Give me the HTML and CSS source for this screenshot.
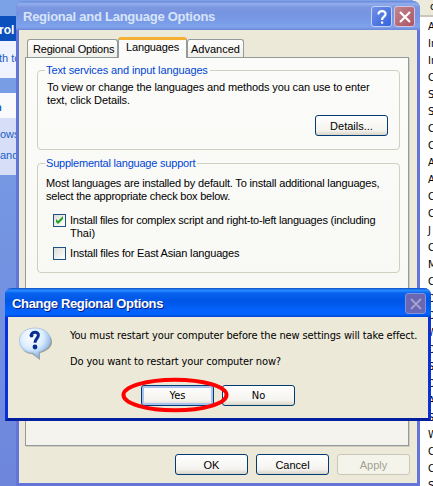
FILE: index.html
```html
<!DOCTYPE html>
<html lang="en">
<head>
<meta charset="utf-8">
<title>Regional and Language Options</title>
<link rel="stylesheet" href="styles.css">
</head>
<body>
<div class="desktop">
  <aside class="side">
    <div class="side-head">rol</div>
    <div class="side-box side-top"><span>th to</span></div>
    <div class="side-title">n</div>
    <div class="side-box side-bottom"><span>ows</span><span>and</span></div>
  </aside>
  <div class="list">
    <div class="list-head">c</div>
    <div>A</div><div>In</div><div>In</div><div>C</div><div>S</div><div>S</div><div>C</div><div>C</div><div>A</div><div>A</div><div>C</div><div>C</div><div>J</div><div>C</div><div>M</div><div>C</div><div>D</div><div>D</div><div>W</div><div>D</div><div>S</div><div>D</div><div>A</div><div>S</div><div>W</div><div>C</div><div>C</div><div>S</div>
  </div>

  <section class="window options">
    <header class="titlebar">
      <h1>Regional and Language Options</h1>
      <span class="cap help"><svg width="20" height="20" viewBox="0 0 20 20"><path d="M6.500 7.500C6 3 14.500 3 13.500 7.500c-.3 2-3.500 2.500-3.500 5.500" fill="none" stroke="#fff" stroke-width="2.200"/><path d="M9 14.500h2.200v2.200H9z" fill="#fff"/></svg></span>
      <span class="cap close"><svg width="20" height="20" viewBox="0 0 20 20"><path d="M5 5l10 10M15 5L5 15" stroke="#fff" stroke-width="2.2"/></svg></span>
    </header>
    <nav class="tabs">
      <span class="tab t1"><i>Regional Options</i></span>
      <span class="tab t2 active"><i>Languages</i></span>
      <span class="tab t3"><i>Advanced</i></span>
    </nav>
    <div class="panel">
      <fieldset class="group services">
        <legend><i class="lg1">Text services and input languages</i></legend>
        <p class="a1">To view or change the languages and methods you can use to enter</p>
        <p class="a2">text, click Details.</p>
        <button class="btn details"><i>Details...</i></button>
      </fieldset>
      <fieldset class="group support">
        <legend><i class="lg2">Supplemental language support</i></legend>
        <p class="b1">Most languages are installed by default. To install additional languages,</p>
        <p class="b2">select the appropriate check box below.</p>
        <label class="check first"><span class="box"><svg width="11" height="11" viewBox="0 0 11 11"><path d="M2 4v3l2 2 5-5V1L4 6z" fill="#21a121"/></svg></span><span><span class="c1">Install files for complex script and right-to-left languages (including</span><br><span class="c2">Thai)</span></span></label>
        <label class="check"><span class="box"></span><span class="c3">Install files for East Asian languages</span></label>
      </fieldset>
    </div>
    <footer class="actions">
      <button class="btn">OK</button>
      <button class="btn cancel"><i>Cancel</i></button>
      <button class="btn disabled"><i>Apply</i></button>
    </footer>
  </section>

  <section class="window dialog">
    <header class="titlebar">
      <h1>Change Regional Options</h1>
      <span class="cap"><svg width="20" height="20" viewBox="0 0 20 20"><path d="M5 5l10 10M15 5L5 15" stroke="#a3a0d0" stroke-width="2"/></svg></span>
    </header>
    <div class="message">
      <svg class="bubble" width="36" height="34" viewBox="0 0 36 34">
        <defs><radialGradient id="g" cx=".4" cy=".3" r=".75"><stop offset="0" stop-color="#fff"/><stop offset=".5" stop-color="#dcedff"/><stop offset="1" stop-color="#6a9fe0"/></radialGradient></defs>
        <path d="M18 3c9 0 16 5 16 12 0 5-5 9-12 11v7l-8-6C7 27 3 22 3 15 3 8 9 3 18 3z" fill="#77776f" opacity=".7"/>
        <path d="M17 1c9 0 15.500 5 15.500 12.500 0 5.500-5 10-11.500 11.500v6.500L15 26C7 26 1.500 21 1.500 13.500S8 1 17 1z" fill="url(#g)" stroke="#9bb9da" stroke-width=".7"/>
        <path d="M13.500 9C12.500 4 21.500 4 20.300 8.700c-.3 2.600-3.300 3.300-3.300 7" fill="none" stroke="#08318f" stroke-width="3"/><circle cx="13.500" cy="8.500" r="2" fill="#08318f"/><circle cx="17" cy="20" r="2.400" fill="#08318f"/>
      </svg>
      <div class="copy">
        <p class="d1">You must restart your computer before the new settings will take effect.</p>
        <p class="d2">Do you want to restart your computer now?</p>
      </div>
    </div>
    <div class="answers">
      <button class="btn default">Yes</button>
      <button class="btn">No</button>
      <svg class="ring" width="108" height="36" viewBox="0 0 108 36"><ellipse cx="54" cy="18" rx="51.500" ry="15.300" fill="none" stroke="#f00" stroke-width="4"/></svg>
    </div>
  </section>
</div>
</body>
</html>
```
FILE: styles.css
```css
* { box-sizing: border-box; }
body { margin: 0; }
p, h1 { margin: 0; }
i { font-style: normal; }
.desktop {
  position: relative; width: 433px; height: 486px; overflow: hidden;
  display: flex; justify-content: space-between;
  background: linear-gradient(#7ba2e7, #6d86dc);
  font: 11px/13px "Liberation Sans", sans-serif; color: #000;
}
.side { width: 17px; padding-top: 16px; overflow: hidden; color: #215dc6; }
.side-head { height: 25px; padding-top: 8px; background: #0c50bd; color: #fff; font-weight: bold; font-size: 12px; text-indent: -1px; }
.side-box { background: #d6dff7; white-space: nowrap; }
.side-top { height: 37px; padding-top: 11px; background: #eff3ff; text-indent: -1px; }
.side-title { height: 25px; margin-top: 15px; padding-top: 8px; background: #fafafc; font-weight: bold; text-indent: -5px; }
.side-bottom { height: 57px; padding-top: 10px; display: flex; flex-direction: column; gap: 8px; }
.list { width: 20px; background: #fff; overflow: hidden; }
.list div { height: 17px; padding: 1px 0 0 15px; line-height: 17px; white-space: nowrap; font-family: "DejaVu Sans Condensed", sans-serif; font-size: 11px; }
.list .list-head { height: 17px; padding: 0 0 0 17px; background: #ebeadb; border-bottom: 2px solid #cbc7b8; line-height: 13px; }

.window { position: absolute; display: flex; flex-direction: column; background: #ece9d8; white-space: nowrap; }
.titlebar { display: flex; align-items: center; flex: none; }
.titlebar h1 { flex: 1; font: bold 13px/18px "Liberation Sans", sans-serif; }
.cap { width: 21px; height: 21px; border: 1px solid; border-radius: 3px; display: flex; align-items: center; justify-content: center; }
.cap svg { flex: none; }

.options { left: 16px; top: 1px; width: 404px; height: 485px; border: solid #6375d8; border-width: 0 3px 3px; border-radius: 7px 7px 0 0; }
.options .titlebar { height: 29px; margin: 0 -3px; padding: 2px 5px 0 7px; gap: 2px; border-radius: 7px 7px 0 0; background: linear-gradient(#6a86da 0, #91aeed 10%, #7c97df 22%, #7694e2 45%, #7a9de9 75%, #7ea3eb 90%, #6c87d8); color: #d8e4f8; }
.options h1 { letter-spacing: -.25px; }
.help { background: linear-gradient(135deg, #7291e4, #3463df); border-color: #c4d2f5; }
.close { background: linear-gradient(135deg, #c0868f, #ae5464); border-color: #d6c4df; }

.tabs { display: flex; align-items: flex-end; height: 27px; padding-left: 8px; }
.tab { height: 18px; padding: 2px 0 0 6px; border: 1px solid #919b9c; border-bottom: 0; border-radius: 3px 3px 0 0; background: linear-gradient(#fefefe, #f0efe8); font-size: 11px; line-height: 15px; }
.t1 { width: 91px; padding-left: 5px; letter-spacing: -.2px; }
.t2 { width: 69px; letter-spacing: -.15px; }
.t3 { width: 57px; padding-left: 3px; }
.tab.active { position: relative; height: 21px; margin-bottom: -1px; padding: 0 0 0 7px; background: #fbfbf9; border-top: 3px solid #f5b033; }
.panel { width: 384px; height: 389px; margin-left: 6px; padding: 6px 8px 0 11px; border: 1px solid #919b9c; box-shadow: 1px 1px #d0cebf; background: linear-gradient(#fbfbf9, #f8f8f5 60%, #f3f2ec); }
.group { margin: 0; min-width: 0; border: 1px solid #d0d0bf; border-radius: 4px; padding: 0 0 0 9px; }
.group legend { height: 13px; padding: 0 2px 0 1px; margin-left: -2px; color: #0046d5; }
.lg1 { letter-spacing: -.12px; }
.lg2 { letter-spacing: -.21px; }
.services { height: 86px; }
.services p { line-height: 13px; }
.services .a1 { margin-top: 4px; letter-spacing: -.12px; }
.services .a2 { letter-spacing: -.1px; }
.services .btn { display: block; margin: 8px 0 0 268px; }
.support { margin-top: 7px; height: 116px; padding-left: 8px; }
.support legend { margin-left: -1px; }
.support .b1 { margin-top: 7px; letter-spacing: -.18px; }
.support .b2 { letter-spacing: -.22px; }
.check { display: flex; gap: 4px; margin: 7px 0 0 7px; }
.check.first { margin-top: 11px; }
.c1 { letter-spacing: -.23px; }
.c3 { letter-spacing: -.18px; }
.box { flex: none; width: 13px; height: 13px; border: 1px solid #1d5281; background: linear-gradient(135deg, #dcdcd7, #fff); }
.box svg { display: block; }

.btn { flex: none; width: 73px; height: 21px; padding: 0; border: 1px solid #003c74; border-radius: 3px; background: linear-gradient(#fff, #f4f3ee 75%, #d9d4c8); font: 11px/18px "Liberation Sans", sans-serif; color: #000; }
.btn.disabled { border-color: #c9c7ba; background: #f5f4ea; color: #a1a192; }
.actions { display: flex; justify-content: flex-end; gap: 8px; margin: 8px 7px 0 0; }

.dialog { left: 5px; top: 288px; width: 426px; height: 133px; border: solid #0831d9; border-width: 0 3px 3px; border-bottom-color: #001ea0; border-radius: 7px 7px 0 0; font-family: "DejaVu Sans Condensed", sans-serif; }
.dialog .titlebar { height: 29px; margin: 0 -3px; padding: 2px 5px 0 7px; border-radius: 7px 7px 0 0; background: linear-gradient(#0a50c8 0, #2b8cff 8%, #0762ef 18%, #0055e5 45%, #0361fb 75%, #0264ff 90%, #0144d0); color: #fff; }
.dialog h1 { letter-spacing: -.34px; text-shadow: 1px 1px #0b1f7c; }
.dialog .cap { border-color: #8791d8; background: #6a67b4; }
.message { display: flex; height: 49px; padding: 10px 0 0 10px; gap: 16px; }
.bubble { flex: none; }
.copy { padding-top: 2px; display: flex; flex-direction: column; gap: 13px; }
.d1 { letter-spacing: -.13px; }
.d2 { letter-spacing: -.14px; }
.answers { position: relative; display: flex; gap: 8px; margin: 19px 0 0 133px; }
.dialog .btn { font-family: "DejaVu Sans Condensed", sans-serif; }
.btn.default { box-shadow: inset 0 0 0 2px #a9c3f0; }
.ring { position: absolute; left: -20px; top: -8px; }
```
